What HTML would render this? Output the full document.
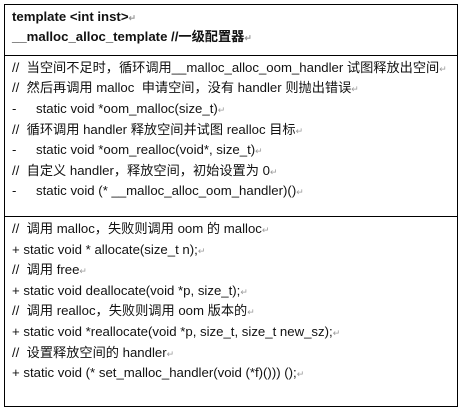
<!DOCTYPE html><html><head><meta charset="utf-8"><style>
body{margin:0;width:463px;height:411px;background:#fff;position:relative;overflow:hidden;font-family:"Liberation Sans","Noto Sans CJK SC",sans-serif;font-size:13.2px;color:#111}
.box{position:absolute;left:4px;top:4px;width:452px;height:401px;border:1px solid #000}
.hr{position:absolute;left:4px;width:454px;height:1px;background:#000}
.l{position:absolute;left:12px;white-space:nowrap;line-height:16px}
.b{font-weight:bold}
.r{color:#999;font-size:9px}
.d{display:inline-block;width:24px}
</style></head><body>
<div class="box"></div>
<div class="hr" style="top:55px"></div>
<div class="hr" style="top:216px"></div>
<div class="l b" style="top:9px">template &lt;int inst&gt;<span class="r">↵</span></div>
<div class="l b" style="top:29px">__malloc_alloc_template //一级配置器<span class="r">↵</span></div>
<div class="l" style="top:60px">//&nbsp; 当空间不足时，循环调用__malloc_alloc_oom_handler 试图释放出空间<span class="r">↵</span></div>
<div class="l" style="top:80px">//&nbsp; 然后再调用 malloc&nbsp; 申请空间，没有 handler 则抛出错误<span class="r">↵</span></div>
<div class="l" style="top:101px"><span class="d">-</span>static void *oom_malloc(size_t)<span class="r">↵</span></div>
<div class="l" style="top:122px">//&nbsp; 循环调用 handler 释放空间并试图 realloc 目标<span class="r">↵</span></div>
<div class="l" style="top:142px"><span class="d">-</span>static void *oom_realloc(void*, size_t)<span class="r">↵</span></div>
<div class="l" style="top:163px">//&nbsp; 自定义 handler，释放空间，初始设置为 0<span class="r">↵</span></div>
<div class="l" style="top:183px"><span class="d">-</span>static void (* __malloc_alloc_oom_handler)()<span class="r">↵</span></div>
<div class="l" style="top:221px">//&nbsp; 调用 malloc，失败则调用 oom 的 malloc<span class="r">↵</span></div>
<div class="l" style="top:242px">+ static void * allocate(size_t n);<span class="r">↵</span></div>
<div class="l" style="top:262px">//&nbsp; 调用 free<span class="r">↵</span></div>
<div class="l" style="top:283px">+ static void deallocate(void *p, size_t);<span class="r">↵</span></div>
<div class="l" style="top:303px">//&nbsp; 调用 realloc，失败则调用 oom 版本的<span class="r">↵</span></div>
<div class="l" style="top:324px">+ static void *reallocate(void *p, size_t, size_t new_sz);<span class="r">↵</span></div>
<div class="l" style="top:345px">//&nbsp; 设置释放空间的 handler<span class="r">↵</span></div>
<div class="l" style="top:365px">+ static void (* set_malloc_handler(void (*f)())) ();<span class="r">↵</span></div>
</body></html>
